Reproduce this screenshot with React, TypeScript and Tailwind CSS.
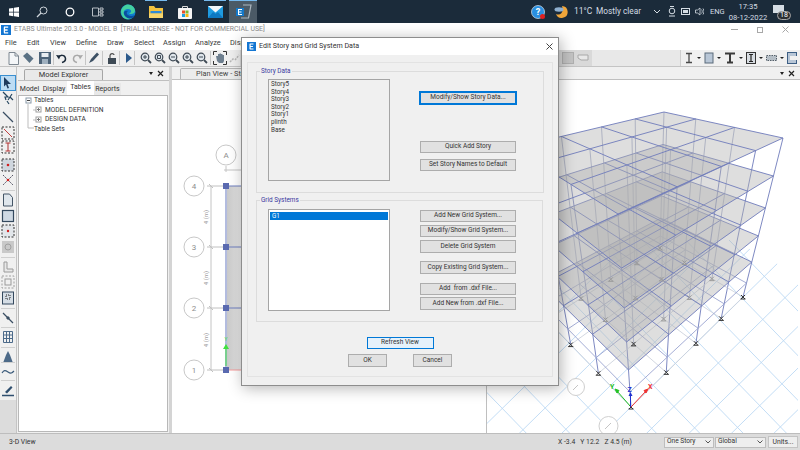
import React from "react";

type Pt = [number, number];

const font = { fontFamily: 'Roboto, "Noto Sans", sans-serif' };

// maps the unit square on to a quad (back, right, front, left) with real perspective
function homography(q: Pt[]) {
  const [p0, p1, p2, p3] = q;
  const dx1 = p1[0] - p2[0];
  const dx2 = p3[0] - p2[0];
  const sx = p0[0] - p1[0] + p2[0] - p3[0];
  const dy1 = p1[1] - p2[1];
  const dy2 = p3[1] - p2[1];
  const sy = p0[1] - p1[1] + p2[1] - p3[1];
  const den = dx1 * dy2 - dx2 * dy1;
  const g = (sx * dy2 - dx2 * sy) / den;
  const h = (dx1 * sy - sx * dy1) / den;
  const a = p1[0] - p0[0] + g * p1[0];
  const b = p3[0] - p0[0] + h * p3[0];
  const d = p1[1] - p0[1] + g * p1[1];
  const e = p3[1] - p0[1] + h * p3[1];
  return (u: number, v: number): Pt => {
    const w = g * u + h * v + 1;
    return [(a * u + b * v + p0[0]) / w, (d * u + e * v + p0[1]) / w];
  };
}

const topQ: Pt[] = [[666, 112], [785, 138], [620, 214], [515, 148]];
const baseQ: Pt[] = [[662, 248], [745, 297], [633, 407], [549, 320]];
const tFar = [0, 0.239, 0.44, 0.616, 0.78, 0.912, 1];
const tFront = [0, 0.28, 0.487, 0.663, 0.808, 0.922, 1];

function levelQuad(i: number): Pt[] {
  return topQ.map((p, k) => {
    const t = k === 2 ? tFront[i] : tFar[i];
    return [p[0] + (baseQ[k][0] - p[0]) * t, p[1] + (baseQ[k][1] - p[1]) * t] as Pt;
  });
}

const US = [0, 1, 2, 3];
const VS = [0, 1, 2, 3, 4];

// the floor grid: two families of lines running with the building's base edges
function groundLines() {
  const out: React.ReactNode[] = [];
  for (let k = -14; k <= 14; k++) {
    const ax = 633 + k * 21;
    const ay = 407 + k * 21;
    out.push(<line key={"a" + k} x1={ax - 300} y1={ay + 294} x2={ax + 300} y2={ay - 294} />);
    const bx = 633 + k * 22;
    const by = 407 - k * 22;
    out.push(<line key={"b" + k} x1={bx - 300} y1={by - 309} x2={bx + 300} y2={by + 309} />);
  }
  return out;
}

function Building() {
  const levels = [0, 1, 2, 3, 4, 5, 6].map((i) => levelQuad(i));
  const base = homography(baseQ);
  return (
    <g>
      <defs>
        <clipPath id="floor">
          <polygon points="489,433 800,433 800,275 735,240 640,240 489,330" />
        </clipPath>
      </defs>
      <g stroke="#bcd9f4" strokeWidth="0.9" clipPath="url(#floor)">{groundLines()}</g>
      {/* columns */}
      {US.map((u) =>
        VS.map((v) => {
          const a = homography(levels[0])(u / 3, v / 4);
          const b = base(u / 3, v / 4);
          const outer = u === 3 || v === 4;
          return (
            <line
              key={`c${u}${v}`}
              x1={a[0]}
              y1={a[1]}
              x2={b[0]}
              y2={b[1]}
              stroke={outer ? "#6f7cbb" : "#a4abc9"}
              strokeWidth="0.9"
            />
          );
        })
      )}
      {/* slabs, lowest first */}
      {[6, 5, 4, 3, 2, 1, 0].map((i) => {
        const q = levels[i];
        const m = homography(q);
        const stroke = i === 6 ? "#cdd2dc" : i === 5 ? "#9aa4d0" : "#6f7cbb";
        return (
          <g key={i}>
            {i < 5 && (
              <polygon
                points={q.map((p) => p.join(",")).join(" ")}
                fill="#b0b0b0"
                fillOpacity={0.42}
              />
            )}
            <g stroke={stroke} strokeWidth="0.9" fill="none">
              {US.map((u) => {
                const a = m(u / 3, 0);
                const b = m(u / 3, 1);
                return <line key={u} x1={a[0]} y1={a[1]} x2={b[0]} y2={b[1]} />;
              })}
              {VS.map((v) => {
                const a = m(0, v / 4);
                const b = m(1, v / 4);
                return <line key={v} x1={a[0]} y1={a[1]} x2={b[0]} y2={b[1]} />;
              })}
            </g>
          </g>
        );
      })}
      {/* supports */}
      {US.map((u) =>
        VS.map((v) => {
          const p = base(u / 3, v / 4);
          const outer = u === 3 || v === 4 || (u === 2 && v === 3);
          const c = outer ? "#333" : "#9a9a9a";
          return (
            <path
              key={`s${u}${v}`}
              d={`M${p[0] - 2} ${p[1] - 2}L${p[0] + 2} ${p[1] + 2}M${p[0] + 2} ${p[1] - 2}L${p[0] - 2} ${p[1] + 2}M${p[0] - 2.5} ${p[1] + 2}h5`}
              stroke={c}
              strokeWidth="1"
              fill="none"
            />
          );
        })
      )}
      {/* bubbles on the ground */}
      <circle cx="578" cy="387" r="8.5" fill="#fff" stroke="#cfcfcf" />
      <path d="M575 390l5-5" stroke="#c4c4c4" />
      <circle cx="610.500" cy="426" r="9.500" fill="#fff" stroke="#cfcfcf" />
      <path d="M607 429l6-6" stroke="#c4c4c4" />
      {/* axes */}
      <path d="M633 407L619 391" stroke="#22c222" strokeWidth="1" />
      <path d="M617 389l4 1.500-2 2.500z" fill="#22c222" stroke="#22c222" />
      <path d="M633 407L648 391" stroke="#f03030" strokeWidth="1" />
      <path d="M650 389l-4 1.500 2 2.500z" fill="#f03030" stroke="#f03030" />
      <path d="M632.500 407V394" stroke="#2030d0" strokeWidth="1" />
      <path d="M632.500 392l-2 4h4z" fill="#2030d0" />
      <text x="612" y="389" fontSize="7" fill="#22c222" style={font} fontWeight="700">Y</text>
      <text x="650" y="389" fontSize="7" fill="#f03030" style={font} fontWeight="700">X</text>
      <text x="629.500" y="392" fontSize="7" fill="#2030d0" style={font} fontWeight="700">Z</text>
    </g>
  );
}

function PlanDrawing() {
  const ys = [186, 247, 308, 370];
  const labels = ["4", "3", "2", "1"];
  return (
    <g>
      <defs>
        <linearGradient id="slab" x1="0" x2="1" y1="0" y2="0">
          <stop offset="0" stopColor="#c9c9c9" />
          <stop offset="1" stopColor="#e8e8e8" />
        </linearGradient>
      </defs>
      <rect x="228" y="186" width="14" height="184" fill="url(#slab)" />
      <circle cx="227" cy="155" r="10" fill="#fff" stroke="#c8c8c8" />
      <text x="227" y="158" fontSize="8" fill="#8e8e8e" textAnchor="middle" style={font}>A</text>
      <path d="M227 166v6M225 170h17M212 186v184" stroke="#c4c4c4" fill="none" />
      {ys.map((y, i) => (
        <g key={y}>
          <circle cx="195" cy={y} r="10" fill="#fff" stroke="#c8c8c8" />
          <text x="195" y={y + 3} fontSize="8" fill="#8e8e8e" textAnchor="middle" style={font}>{labels[i]}</text>
          <path d={`M208 ${y}h19M210 ${y - 2}l4 4`} stroke="#c0c0c0" fill="none" />
          <line x1="227" y1={y} x2="242" y2={y} stroke={i === 3 ? "#f59a9a" : "#6f7fc0"} />
        </g>
      ))}
      <line x1="227" y1="186" x2="227" y2="370" stroke="#9aa6d4" strokeWidth="1.500" />
      {ys.map((y) => (
        <rect key={y} x="224" y={y - 3} width="6" height="6" fill="#5a6ab0" />
      ))}
      <path d="M227 366V347" stroke="#3fe23f" strokeWidth="1" />
      <path d="M227 344l-3 5h6z" fill="#3fe23f" />
      <text x="227" y="341" fontSize="5" fill="#3fe23f" textAnchor="middle" style={font}>Y</text>
      {[217, 278, 340].map((y) => (
        <text key={y} x="209" y={y} fontSize="6" fill="#a0a0a0" textAnchor="middle" transform={`rotate(-90 209 ${y})`} style={font}>
          4 (m)
        </text>
      ))}
    </g>
  );
}

function Ico({ children, w = 14, h = 14 }: { children: React.ReactNode; w?: number; h?: number }) {
  return (
    <svg width={w} height={h} viewBox={`0 0 ${w} ${h}`} fill="none" className="shrink-0">
      {children}
    </svg>
  );
}

function Taskbar() {
  const cell = "w-7 h-full flex items-center justify-center relative";
  const bar = "absolute top-0 left-[3px] right-[3px] h-px bg-[#76b9ed]";
  return (
    <div className="h-[23px] bg-[#1b2b3a] flex items-center shrink-0 text-[#e8edf2]">
      <div className={cell}>
        <Ico w={10} h={10}>
          <path d="M0 1.500L4.300.900V4.700H0zM5 .800L10 0V4.700H5zM0 5.400H4.300V9.200L0 8.600zM5 5.400H10V10L5 9.300z" fill="#fff" />
        </Ico>
      </div>
      <div className={cell}>
        <Ico w={12} h={12}>
          <circle cx="7.500" cy="4.500" r="3.500" stroke="#cfd6dc" />
          <path d="M5 7L1 11" stroke="#cfd6dc" strokeWidth="1.200" />
        </Ico>
      </div>
      <div className={cell}>
        <Ico w={10} h={10}>
          <circle cx="5" cy="5" r="3.800" stroke="#fff" strokeWidth="1.300" />
        </Ico>
      </div>
      <div className={cell}>
        <Ico w={12} h={10}>
          <path d="M.500 1h6v8h-6zM8 1h3v2H8zM8 4h3v2H8zM8 7h3v2H8z" stroke="#c8ced4" strokeWidth=".9" />
        </Ico>
      </div>
      <div className={cell + " ml-[2px]"}>
        <Ico w={16} h={16}>
          <circle cx="8" cy="8" r="7.500" fill="#0f7fd0" />
          <path d="M1 7C2 2 6 .500 8 .500c4 0 7 3 7 6.500 0 2-2 3-4 3-1 0-2-.500-2-1 3 0 3-4-1-4C5 5 3 7 4 10c1 3 4 5.500 8 4-3 2.500-11 2-11-7z" fill="#43d0a0" />
          <path d="M4 10c1 3 4 5.500 8 4 1.500-.700 2.500-1.800 3-3-2 1-5 1.500-7 0-2-1.500-1.500-4 1-4-3-1-6 0-5 3z" fill="#0b4f9e" />
        </Ico>
      </div>
      <div className={cell}>
        <div className={bar} />
        <Ico w={14} h={13}>
          <path d="M0 1h5l1.500 2H14v10H0z" fill="#f4c23e" />
          <rect x="1.500" y="6" width="11" height="2.500" fill="#2f8ad6" />
          <rect y="8.500" width="14" height="4.500" fill="#f7d56b" />
        </Ico>
      </div>
      <div className={cell + " ml-px"}>
        <Ico w={14} h={14}>
          <path d="M4.500 3V1.500h5V3" stroke="#d9d9d9" />
          <rect y="3" width="14" height="11" rx="1" fill="#f5f5f5" />
          <rect x="4" y="5.500" width="3" height="3" fill="#e8502a" />
          <rect x="7.500" y="5.500" width="3" height="3" fill="#7cb82f" />
          <rect x="4" y="9" width="3" height="3" fill="#1b9de2" />
          <rect x="7.500" y="9" width="3" height="3" fill="#f5b90f" />
        </Ico>
      </div>
      <div className={cell + " ml-[2px]"}>
        <div className={bar} />
        <Ico w={15} h={12}>
          <rect width="15" height="12" fill="#1f9be0" />
          <path d="M0 0h15L7.500 6.500z" fill="#f2f6fa" />
          <path d="M0 12l5-6 2.500 2 2.500-2 5 6z" fill="#0e78c2" />
        </Ico>
      </div>
      <div className={cell + " bg-[#4b5a66]"}>
        <div className="absolute top-0 left-0 right-0 h-px bg-[#76b9ed]" />
        <Ico w={18} h={15}>
          <path d="M9 1h8l-2.500 13H7" stroke="#aeb8c0" strokeWidth="1.200" />
          <rect x="2" y="4" width="8" height="8" fill="#1478c8" />
          <path d="M4 5.500h4M4 8h3.500M4 10.500h4M4.500 5.500v5" stroke="#fff" />
        </Ico>
      </div>

      <div className="ml-auto flex items-center h-full whitespace-nowrap text-[#d5dde4] pr-[9px]">
        <Ico w={14} h={14}>
          <circle cx="7" cy="7" r="6.500" fill="#2a8fe0" stroke="#fff" strokeWidth=".6" />
          <text x="7" y="10" fontSize="9" fontWeight="700" fill="#fff" textAnchor="middle" style={font}>?</text>
          <circle cx="11.500" cy="11.500" r="2.500" fill="#e02020" />
        </Ico>
        <div className="ml-[9px]">
          <Ico w={14} h={14}>
            <path d="M8 1a6 6 0 1 1-6 8c4 2 8-1 6-8z" fill="#f0a63a" />
            <ellipse cx="5" cy="4.500" rx="4.500" ry="2.200" fill="#8fb0d0" />
          </Ico>
        </div>
        <span className="ml-[6px] w-[17px] text-[8.5px]">11°C</span>
        <span className="ml-[5px] w-[44px] text-[8.3px]">Mostly clear</span>
        <div className="ml-[13px]">
          <Ico w={8} h={6}>
            <path d="M1 1l3 3 3-3" stroke="#d5dde4" />
          </Ico>
        </div>
        <div className="ml-[7px]">
          <Ico w={8} h={11}>
            <circle cx="4" cy="5" r="2.800" stroke="#d5dde4" />
            <path d="M1 10h6M2 .500h4" stroke="#d5dde4" />
          </Ico>
        </div>
        <div className="ml-[5px]">
          <Ico w={10} h={7}>
            <rect x=".500" y=".500" width="8" height="6" stroke="#d5dde4" />
            <rect x="2" y="2" width="5" height="3" fill="#d5dde4" />
          </Ico>
        </div>
        <div className="ml-[4px]">
          <Ico w={9} h={9}>
            <path d="M.500 3h2l2.500-2v7L2.500 6h-2zM6.500 2.500c1 1.200 1 2.800 0 4M8 1.500c1.300 2 1.300 4 0 6" stroke="#d5dde4" strokeWidth=".8" />
          </Ico>
        </div>
        <span className="ml-[6px] w-[14px] text-[7.5px]">ENG</span>
        <div className="ml-[6px] w-[36px] flex flex-col items-center leading-[11px] text-[7.6px]">
          <span>17:35</span>
          <span>08-12-2022</span>
        </div>
        <div className="ml-[7px] relative w-[18px] h-[16px]">
          <div className="w-[11px] h-[8px] bg-[#d5dde4] mt-[1px]" />
          <span className="absolute right-0 bottom-0 w-[14px] h-[9px] rounded-full bg-[#2b2f33] border border-[#aaa] text-[7px] leading-[7px] text-center text-white">
            18
          </span>
        </div>
      </div>
    </div>
  );
}

function EtabsLogo({ size }: { size: number }) {
  return (
    <svg width={size} height={size} viewBox="0 0 10 10" className="shrink-0">
      <rect width="10" height="10" fill="#1476d2" />
      <path d="M3 2.200h4.200M3 5h3.600M3 7.800h4.200M3.400 2.200v5.600" stroke="#fff" strokeWidth="1.300" />
    </svg>
  );
}

function TitleBar() {
  return (
    <div className="h-[13px] bg-white flex items-center shrink-0 pl-px">
      <EtabsLogo size={10} />
      <span className="ml-[3px] text-[6.9px] text-[#8b8b8b] whitespace-pre">
        ETABS Ultimate 20.3.0 - MODEL B  [TRIAL LICENSE - NOT FOR COMMERCIAL USE]
      </span>
      <div className="ml-auto flex items-center mr-[11px] gap-[19px]">
        <div className="w-[7px] h-px bg-[#a8a8a8]" />
        <div className="w-[6px] h-[6px] border border-[#a8a8a8]" />
        <Ico w={7} h={7}>
          <path d="M.500.500l6 6M6.500.500l-6 6" stroke="#a8a8a8" />
        </Ico>
      </div>
    </div>
  );
}

const menus: [string, number][] = [
  ["File", 5],
  ["Edit", 27],
  ["View", 50],
  ["Define", 76],
  ["Draw", 107],
  ["Select", 134],
  ["Assign", 163],
  ["Analyze", 195],
  ["Display", 230],
];

function MenuBar() {
  return (
    <div className="h-[14px] bg-white flex items-center shrink-0 text-[7.4px] text-[#3a3a3a] pl-[5px]">
      {menus.map(([m, x], i) => (
        <span key={m} style={{ width: i + 1 < menus.length ? menus[i + 1][1] - x : undefined }}>
          {m}
        </span>
      ))}
    </div>
  );
}

function Mag({ c = "#3f4a55", mark }: { c?: string; mark?: string }) {
  return (
    <Ico w={12} h={12}>
      <circle cx="5" cy="5" r="3.800" stroke={c} strokeWidth="1.200" fill="#dfe6ec" />
      <path d="M8 8l3 3" stroke={c} strokeWidth="1.800" />
      {mark && <path d={mark} stroke={c} />}
    </Ico>
  );
}

const Sep = () => <div className="w-px h-[14px] bg-[#c6c6c6] mx-[2px] shrink-0" />;

function RightTools() {
  const Arrow = () => <div className="w-0 h-0 border-x-[2px] border-x-transparent border-t-[2px] border-t-[#222] mx-[3px]" />;
  return (
    <div className="flex items-center pl-[3px] bg-[#f0f0f0] h-full flex-1 border-l border-[#cfcfcf]">
      <Ico w={10} h={12}>
        <path d="M2 1.500h6M2 10.500h6M5 1.500v9" stroke="#4a4a4a" strokeWidth="1.300" />
      </Ico>
      <Arrow />
      <Ico w={10} h={12}>
        <rect x="1" y="1" width="8" height="10" fill="#b8c6d6" stroke="#5a6a7a" />
      </Ico>
      <Arrow />
      <Ico w={12} h={12}>
        <path d="M1 1.500h10M6 2v8M3 10.500h6" stroke="#3a3a3a" strokeWidth="2" />
      </Ico>
      <Arrow />
      <Ico w={10} h={12}>
        <rect x=".500" y=".500" width="9" height="11" fill="#d8dde2" stroke="#333" />
        <path d="M3 2.500h4M3 9.500h4M5 2.500v7" stroke="#222" strokeWidth="1.200" />
      </Ico>
      <Arrow />
      <Ico w={11} h={6}>
        <rect x=".500" y=".500" width="10" height="5" fill="#b5bec6" stroke="#55606a" strokeDasharray="1.500 1" />
      </Ico>
      <Arrow />
      <Ico w={10} h={12}>
        <rect x=".500" y=".500" width="9" height="11" fill="#b8c6d6" stroke="#3d5f85" />
        <rect x="3" y="4" width="7" height="4" fill="#f0f0f0" />
      </Ico>
    </div>
  );
}

function Toolbar() {
  return (
    <div className="h-[17px] flex items-center shrink-0 bg-[#e3e3e3] border-b border-[#c4c4c4]">
      <div className="flex items-center h-full pl-[8px] bg-[#efefef] w-[240px] shrink-0">
        <Ico w={11} h={13}>
          <path d="M1 .500h6l3.500 3.500v8.500H1z" fill="#f4f6f8" stroke="#7d8791" />
          <path d="M7 .500V4h3.500" stroke="#7d8791" />
        </Ico>
        <div className="ml-[3px]">
          <Ico w={12} h={12}>
            <path d="M1 4l4-3.500 6.500 6L7.500 11z" fill="#5a7184" />
          </Ico>
        </div>
        <div className="ml-[5px]">
          <Ico w={12} h={12}>
            <rect width="12" height="12" fill="#4d6378" />
            <rect x="2.500" y="1" width="7" height="4" fill="#e8edf1" />
            <rect x="3" y="7" width="6" height="5" fill="#9fb0bf" />
          </Ico>
        </div>
        <Sep />
        <Ico w={11} h={11}>
          <path d="M2.500 4.500C4 1.500 9 1.500 9.500 5.500c.200 2-1.500 3.500-3.500 4" stroke="#1b2a3a" strokeWidth="1.500" />
          <path d="M0 2l4.500.500-1.500 4z" fill="#1b2a3a" />
        </Ico>
        <div className="ml-[5px]">
          <Ico w={11} h={11}>
            <path d="M8.500 4.500C7 1.500 2 1.500 1.500 5.500c-.200 2 1.500 3.500 3.500 4" stroke="#a9a9a9" strokeWidth="1.500" />
            <path d="M11 2l-4.500.500 1.500 4z" fill="#a9a9a9" />
          </Ico>
        </div>
        <Sep />
        <Ico w={12} h={12}>
          <path d="M1 11l2-4 6-6.500 2 2L5 9z" fill="#3c5064" />
        </Ico>
        <Sep />
        <div className="ml-[2px]">
          <Ico w={10} h={12}>
            <path d="M3 6V3.500C3 1 7 1 7 3" stroke="#4a4a4a" strokeWidth="1.200" />
            <rect x="1" y="6" width="8" height="6" fill="#3e4a55" />
          </Ico>
        </div>
        <Sep />
        <div className="ml-[3px]">
          <Ico w={7} h={10}>
            <path d="M1 0l6 5-6 5z" fill="#2c5a8c" />
          </Ico>
        </div>
        <Sep />
        <div className="flex gap-[2px] ml-[3px]">
          <Mag mark="M3 5h4M5 3v4" />
          <Mag mark="M3.500 3.500h3v3h-3z" />
          <Mag mark="M3 5h4" />
          <Mag mark="M3 5h4M5 3v4" />
          <Mag mark="M3 5h4" />
        </div>
        <Sep />
        <Ico w={14} h={14}>
          <path d="M.500 4V.500H4M10 .500h3.500V4M.500 10v3.500H4M10 13.500h3.500V10" stroke="#333" />
          <path d="M3 5l1 5 2 2h4l1-2V4H9.500V3H8V2.500H6.500V3H5v2z" fill="#6e7f8f" />
        </Ico>
        <div className="ml-[2px] opacity-40">
          <Ico w={12} h={12}>
            <path d="M1 10l4-4M6 8l4-5" stroke="#666" strokeWidth="1.500" strokeDasharray="2 1" />
          </Ico>
        </div>
      </div>
      <div className="w-[352px] h-full shrink-0 bg-[#d9d9d9] flex items-center pl-[322px] gap-[3px]">
        <div className="w-[12px] h-[12px] shrink-0 bg-[#c4c4c4] border border-[#b0b0b0]" />
        <Ico w={12} h={12}>
          <path d="M1 3h10v5H4L1 6z" fill="#e8e8e8" stroke="#a8a8a8" />
        </Ico>
      </div>
      <div className="flex-1 h-full bg-[#e8e8e8]" />
      <div className="w-[120px] h-full shrink-0 flex">
        <RightTools />
      </div>
    </div>
  );
}

const stripIcons: { mt: number; el: React.ReactNode; active?: boolean; sep?: boolean }[] = [
  { mt: 4, active: true, el: <path d="M3 1l7 7H6.500l1.500 4-1.500.500L5 8.500 3 10.500z" fill="#1e3a5c" /> },
  { mt: 1, el: <path d="M2 1l5 5H4l1 3M9 6l3 3M11 3L7 9M6 10l2 3" stroke="#26465f" strokeWidth="1.200" /> },
  { mt: 5, el: <path d="M2 2l10 10" stroke="#3a4e63" strokeWidth="1.300" /> },
  { mt: 2, el: <><rect x="1" y="1" width="12" height="12" stroke="#333" strokeDasharray="2 1.500" /><path d="M3 3l8 8" stroke="#c04040" /></> },
  { mt: 0, el: <><rect x="1" y="1" width="12" height="12" stroke="#333" strokeDasharray="2 1.500" /><path d="M7 3v8M4.500 3h5M4.500 11h5" stroke="#b03030" /></> },
  { mt: 4, el: <><rect x="1" y="1" width="12" height="12" fill="#cfd6de" stroke="#333" strokeDasharray="2 1.500" /><circle cx="7" cy="7" r="1.300" fill="#d02020" /></> },
  { mt: 1, el: <><path d="M2 2l10 10M12 2L2 12" stroke="#556" strokeDasharray="2 1" /><circle cx="7" cy="7" r="1.300" fill="#d02020" /></> },
  { mt: 6, sep: true, el: <path d="M2.500 1h6l3 3.500V13h-9z" fill="#dfe6ec" stroke="#445566" /> },
  { mt: 2, el: <rect x="1.500" y="1.500" width="11" height="11" fill="#cfd9e3" stroke="#34495e" strokeWidth="1.200" /> },
  { mt: 1, el: <><rect x="1" y="1" width="12" height="12" fill="#e2e6ea" stroke="#333" strokeDasharray="2 1.500" /><circle cx="7" cy="7" r="1.200" fill="#d02020" /></> },
  { mt: 2, el: <><rect x="1" y="1" width="12" height="12" fill="#c9c9c9" /><circle cx="7" cy="7" r="3" stroke="#a0a0a0" /></> },
  { mt: 6, sep: true, el: <path d="M3 2h3v7h6v3H3z" fill="#e8e8e8" stroke="#9a9a9a" /> },
  { mt: 1, el: <><rect x="1" y="1" width="12" height="12" stroke="#a0a0a0" strokeDasharray="2 1.500" /><rect x="4" y="4" width="6" height="6" stroke="#9a9a9a" /></> },
  { mt: 2, el: <><rect x="1.500" y="1" width="11" height="12" fill="#d5dde5" stroke="#34495e" /><rect x="5" y="4" width="4" height="4" stroke="#222" strokeDasharray="1 1" /></> },
  { mt: 6, sep: true, el: <><path d="M2 2l10 10" stroke="#3a4e63" strokeWidth="1.200" /><path d="M5 7l2-2 2 2-2 2z" fill="#3a4e63" /></> },
  { mt: 5, sep: true, el: <path d="M2.500 1.500h9v11h-9zM2.500 5h9M2.500 8.500h9M5.500 1.500v11M8.500 1.500v11" stroke="#4c6a8a" /> },
  { mt: 6, sep: true, el: <path d="M7 1l2 4 3 8H2l3-8z" fill="#4d6a88" /> },
  { mt: 1, sep: true, el: <path d="M1 8c2-3 3-3 6-1s4 1 6-1" stroke="#3a5a7a" strokeWidth="1.200" /> },
  { mt: 4, sep: true, el: <><path d="M4 9l6-6 1.500 1.500L6 10.500z" fill="#2f4f6f" /><path d="M1 12.500h12" stroke="#2f4f6f" strokeWidth="1.500" /></> },
];

function LeftStrip() {
  return (
    <div className="w-[17px] shrink-0 bg-[#dcdcdc] border-r border-[#c4c4c4] flex flex-col">
      <div className="bg-[#f0f0f0] pb-[3px] flex flex-col items-center pt-[5px]">
        {stripIcons.map((ic, i) => (
          <div
            key={i}
            style={{ marginTop: ic.mt }}
            className={"relative w-[14px] h-[14px] flex items-center justify-center" + (ic.active ? " bg-[#bcdcf4] outline outline-[#3a8fd0]" : "")}
          >
            {ic.sep && <div className="absolute -top-[3px] left-0 right-0 h-px bg-[#cfcfcf]" />}
            <Ico>{ic.el}</Ico>
          </div>
        ))}
      </div>
    </div>
  );
}

function PanelControls() {
  return (
    <div className="ml-auto flex items-center gap-[4px] pr-[5px] self-center">
      <div className="w-0 h-0 border-x-[2.500px] border-x-transparent border-t-[3px] border-t-[#222]" />
      <Ico w={7} h={7}>
        <path d="M1 1l5 5M6 1L1 6" stroke="#222" strokeWidth="1.200" />
      </Ico>
    </div>
  );
}

function ModelExplorer() {
  return (
    <div className="w-[155px] shrink-0 bg-[#f0f0f0] flex flex-col border-r-[3px] border-[#d4d4d4] pl-px">
      <div className="h-[14px] flex items-end shrink-0 border-b border-[#bfbfbf]">
        <div className="ml-[6px] w-[79px] h-[11px] bg-[#e9e9e9] border border-b-0 border-[#a6a6a6] rounded-t-[2px] text-[7.4px] leading-[10px] text-center text-[#333]">
          Model Explorer
        </div>
        <PanelControls />
      </div>
      <div className="h-[14px] flex items-end shrink-0 text-[7px] text-[#333] leading-[12px]">
        <span className="w-[23px] text-center">Model</span>
        <span className="w-[26px] text-center">Display</span>
        <span className="w-[27px] h-[14px] bg-white text-center leading-[13px]">Tables</span>
        <span className="w-[27px] text-center bg-[#e8e8e8]">Reports</span>
      </div>
      <div className="flex-1 bg-white border border-[#b8b8b8] mr-px relative text-[6.6px] leading-[9.500px] text-[#333] mb-px">
        <svg className="absolute left-[5px] top-0" width="20" height="36" fill="none">
          <path d="M4 8v24h6M9 14h5M9 24h5" stroke="#bdbdbd" />
          <rect x="2" y="2" width="5" height="5" fill="#fff" stroke="#8a9aa8" />
          <path d="M3 4.500h3" stroke="#444" />
          <rect x="12" y="11" width="5" height="5" fill="#fff" stroke="#a0a0a0" />
          <path d="M13 13.500h3M14.500 12v3" stroke="#777" />
          <rect x="12" y="21" width="5" height="5" fill="#fff" stroke="#a0a0a0" />
          <path d="M13 23.500h3M14.500 22v3" stroke="#777" />
        </svg>
        <div className="pl-[15px]">Tables</div>
        <div className="pl-[26px]">MODEL DEFINITION</div>
        <div className="pl-[26px]">DESIGN DATA</div>
        <div className="pl-[15px]">Table Sets</div>
      </div>
    </div>
  );
}

function ViewTabs({ title, controls }: { title?: string; controls?: boolean }) {
  return (
    <div className="h-[13px] bg-[#f0f0f0] border-b border-[#bfbfbf] flex items-end shrink-0 text-[7.4px] text-[#444]">
      {title && (
        <div className="ml-[8px] w-[120px] h-[11px] bg-[#ececec] border border-b-0 border-[#b5b5b5] rounded-t-[2px] leading-[10px] pl-[15px] whitespace-nowrap">
          {title}
        </div>
      )}
      {controls && <PanelControls />}
    </div>
  );
}

function DlgButton({ children, className = "" }: { children: React.ReactNode; className?: string }) {
  return (
    <div
      className={
        "h-[12px] flex items-center justify-center text-[6.5px] text-[#333] whitespace-pre border " + className
      }
    >
      {children}
    </div>
  );
}

const plain = "w-[96px] bg-[#e1e1e1] border-[#adadad]";

function Dialog() {
  return (
    <div className="absolute left-[241px] top-[37px] w-[318px] h-[349px] bg-[#f0f0f0] border border-[#8d8d8d] shadow-[2px_2px_14px_rgba(0,0,0,0.3)] flex flex-col">
      <div className="h-[17px] bg-white flex items-center shrink-0 pl-[5px]">
        <EtabsLogo size={9} />
        <span className="ml-[3px] text-[7.1px] text-[#333]">Edit Story and Grid System Data</span>
        <div className="ml-auto mr-[5px]">
          <Ico w={7} h={7}>
            <path d="M.500.500l6 6M6.500.500l-6 6" stroke="#444" />
          </Ico>
        </div>
      </div>
      <div className="mx-[5px] mt-[7px] h-[315px] border border-[#e3e3e3] px-[8px] pt-[8px]">
        <fieldset className="h-[122px] border border-[#dcdcdc] flex relative pl-[11px] pt-[7px]">
          <span className="absolute left-[3px] -top-[5px] bg-[#f0f0f0] px-px text-[6.4px] leading-[9px] text-[#3a3aa0]">
            Story Data
          </span>
          <div className="w-[122px] h-[102px] border border-[#a5a5a5] bg-[#f0f0f0] pl-[2px] pt-px text-[6.3px] leading-[7.600px] text-[#333] shrink-0">
            {["Story5", "Story4", "Story3", "Story2", "Story1", "plinth", "Base"].map((s) => (
              <div key={s}>{s}</div>
            ))}
          </div>
          <div className="ml-[30px] flex flex-col">
            <DlgButton className="mt-[13px] w-[96px] bg-[#e1e1e1] border-[#0078d7] outline outline-[#0078d7]">Modify/Show Story Data...</DlgButton>
            <DlgButton className={plain + " mt-[37px]"}>Quick Add Story</DlgButton>
            <DlgButton className={plain + " mt-[6px]"}>Set Story Names to Default</DlgButton>
          </div>
        </fieldset>
        <fieldset className="mt-[7px] h-[122px] border border-[#dcdcdc] flex relative pl-[11px] pt-[8px] mr-px">
          <span className="absolute left-[3px] -top-[5px] bg-[#f0f0f0] px-px text-[6.4px] leading-[9px] text-[#3a3aa0]">
            Grid Systems
          </span>
          <div className="w-[122px] h-[102px] border border-[#a5a5a5] bg-white p-px text-[6.3px] leading-[8px] shrink-0">
            <div className="bg-[#0078d7] text-white pl-[2px] mt-px">G1</div>
          </div>
          <div className="ml-[30px] flex flex-col">
            <DlgButton className={plain + " mt-[1px]"}>Add New Grid System...</DlgButton>
            <DlgButton className={plain + " mt-[3px]"}>Modify/Show Grid System...</DlgButton>
            <DlgButton className={plain + " mt-[3px] h-[13px]"}>Delete Grid System</DlgButton>
            <DlgButton className={plain + " mt-[8px] h-[13px]"}>Copy Existing Grid System...</DlgButton>
            <DlgButton className={plain + " mt-[9px]"}>Add  from .dxf File...</DlgButton>
            <DlgButton className={plain + " mt-[2px] h-[13px]"}>Add New from .dxf File...</DlgButton>
          </div>
        </fieldset>
        <div className="flex flex-col items-center mt-[15px]">
          <DlgButton className="w-[67px] h-[12px] bg-[#e5f1fb] border-[#0078d7]">Refresh View</DlgButton>
          <div className="flex gap-[26px] mt-[5px]">
            <DlgButton className="w-[39px] h-[13px] bg-[#e1e1e1] border-[#adadad]">OK</DlgButton>
            <DlgButton className="w-[39px] h-[13px] bg-[#e1e1e1] border-[#adadad]">Cancel</DlgButton>
          </div>
        </div>
      </div>
    </div>
  );
}

function Select({ label, w }: { label: string; w: string }) {
  return (
    <div className={"h-[11px] bg-[#eeeeee] border border-[#bdbdbd] flex items-center pl-[2px] text-[6.6px] text-[#333] " + w}>
      {label}
      <div className="ml-auto mr-[2px]">
        <Ico w={6} h={4}>
          <path d="M.500.500L3 3 5.500.500" stroke="#555" />
        </Ico>
      </div>
    </div>
  );
}

function StatusBar() {
  return (
    <div className="h-[17px] bg-[#dcdcdc] border-t border-[#bdbdbd] flex items-center shrink-0 text-[6.8px] text-[#333] pl-[9px]">
      <span className="w-[549px]">3-D View</span>
      <span className="whitespace-pre">X -3.4   Y 12.2   Z 4.5 (m)</span>
      <div className="ml-auto flex items-center gap-[1px] pr-[2px]">
        <Select label="One Story" w="w-[50px]" />
        <Select label="Global" w="w-[51px]" />
        <div className="ml-[1px] w-[30px] h-[12px] bg-[#eeeeee] border border-[#c4c4c4] text-center leading-[10px]">Units...</div>
      </div>
    </div>
  );
}

export default function App() {
  return (
    <div className="relative w-[800px] h-[450px] overflow-hidden bg-white flex flex-col" style={font}>
      <Taskbar />
      <TitleBar />
      <MenuBar />
      <Toolbar />
      <div className="flex-1 flex min-h-0">
        <LeftStrip />
        <ModelExplorer />
        <div className="w-[315px] shrink-0 flex flex-col border-r border-[#bfbfbf]">
          <ViewTabs title="Plan View - Story5" />
          <div className="flex-1 bg-white">
            <svg width="315" height="353" viewBox="173 80 315 353" className="block">
              <PlanDrawing />
            </svg>
          </div>
        </div>
        <div className="flex-1 flex flex-col min-w-0">
          <ViewTabs controls />
          <div className="flex-1 bg-white">
            <svg width="311" height="353" viewBox="489 80 311 353" className="block">
              <Building />
            </svg>
          </div>
        </div>
      </div>
      <StatusBar />
      <Dialog />
    </div>
  );
}
